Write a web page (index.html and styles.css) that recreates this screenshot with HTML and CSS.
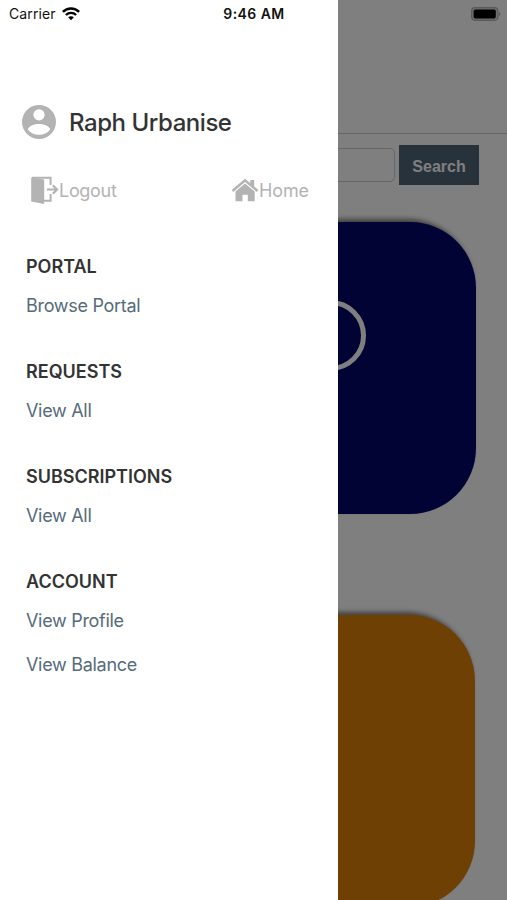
FILE: index.html
```
<!DOCTYPE html>
<html lang="en">
<head>
    <meta charset="UTF-8">
    <meta name="viewport" content="width=device-width, initial-scale=1.0">
    <title>Urbanise Portal</title>
    <link rel="stylesheet" href="styles.css">
</head>
<body>
    <div class="page">
        <div class="page-header"></div>
        <div class="search">
            <input class="search-input" type="text" aria-label="Search">
            <button class="search-button">Search</button>
        </div>
        <div class="cards">
            <div class="card card-blue">
                <div class="ring"></div>
            </div>
            <div class="card card-orange"></div>
        </div>
    </div>

    <div class="backdrop"></div>

    <nav class="drawer">
        <div class="user">
            <svg class="avatar" viewBox="0 0 34 34">
                <circle cx="17" cy="17" r="17" fill="#b3b3b3"/>
                <circle cx="17" cy="9.8" r="5.6" fill="#fff"/>
                <path d="M5.800 24.400C7.200 20.300 12.500 18.900 17 18.900s9.800 1.400 11.200 5.500C25.800 28 21.500 29.800 17 29.800S8.200 28 5.800 24.400z" fill="#fff"/>
            </svg>
            <span class="user-name">Raph Urbanise</span>
        </div>

        <div class="actions">
            <a class="action">
                <svg width="29" height="28" viewBox="0 0 29 28">
                    <path d="M1.200 1.500L14.200 3.500V28L1.200 25.500z" fill="#b3b3b3"/>
                    <path d="M2 1.700H20.600V9M20.600 18V24.800H14" fill="none" stroke="#b3b3b3" stroke-width="2"/>
                    <path d="M17 13.500H26.500M22.800 9.300L27 13.500L22.800 17.700" fill="none" stroke="#b3b3b3" stroke-width="2.200"/>
                </svg>
                <span>Logout</span>
            </a>
            <a class="action home">
                <svg width="28" height="28" viewBox="0 0 28 28">
                    <path d="M1.500 15L14 4.300L26.500 15" fill="none" stroke="#b3b3b3" stroke-width="2.500"/>
                    <path d="M19.300 4H23.200V12.200L19.300 8.800z" fill="#b3b3b3"/>
                    <path d="M4.500 15.500L14 7.500L23.700 15.500V25.300H16.800V18.800H11.500V25.300H4.500z" fill="#b3b3b3"/>
                </svg>
                <span>Home</span>
            </a>
        </div>

        <div class="menu">
            <section class="group">
                <h2>PORTAL</h2>
                <a>Browse Portal</a>
            </section>
            <section class="group">
                <h2>REQUESTS</h2>
                <a>View All</a>
            </section>
            <section class="group">
                <h2>SUBSCRIPTIONS</h2>
                <a>View All</a>
            </section>
            <section class="group">
                <h2>ACCOUNT</h2>
                <a>View Profile</a>
                <a>View Balance</a>
            </section>
        </div>
    </nav>

    <div class="status-bar">
        <div class="carrier">
            <span>Carrier</span>
            <svg width="18" height="14" viewBox="0 0 18 14">
                <path d="M0.900 4.900C5.300 0.300 12.700 0.300 17.100 4.900" fill="none" stroke="#000" stroke-width="2.500"/>
                <path d="M3.900 8C6.700 5.200 11.300 5.200 14.100 8" fill="none" stroke="#000" stroke-width="2.300"/>
                <path d="M6.200 10.300C7.700 8.900 10.300 8.900 11.800 10.300L9 13.200z" fill="#000"/>
            </svg>
        </div>
        <div class="time">9:46 AM</div>
        <svg class="battery" width="30" height="14" viewBox="0 0 30 14">
            <rect x="0.600" y="0.700" width="26.400" height="12.600" rx="3.500" fill="#6e6e6e" stroke="#5a5a5a" stroke-width="1.200"/>
            <rect x="2.600" y="2.500" width="22.200" height="9" rx="1.800" fill="#000"/>
            <path d="M28.100 4.800C29.800 5.300 29.800 8.700 28.100 9.200z" fill="#5a5a5a"/>
        </svg>
    </div>
</body>
</html>
```

FILE: styles.css
```
* {
    box-sizing: border-box;
}

body {
    margin: 0;
    height: 900px;
    position: relative;
    overflow: hidden;
    background: #fff;
    font-family: Inter, "Liberation Sans", sans-serif;
}

/* page behind the drawer */
.page {
    height: 900px;
    overflow: hidden;
}

.page-header {
    height: 134px;
    border-bottom: 1px solid #ccc;
}

.search {
    display: flex;
    justify-content: flex-end;
    align-items: center;
    gap: 4px;
    padding: 11px 28px 0 0;
}

.search-input {
    width: 300px;
    height: 34px;
    border: 1px solid #ccc;
    border-radius: 5px;
    background: #fff;
}

.search-button {
    width: 80px;
    height: 40px;
    padding: 3px 0 0;
    border: none;
    background: #506577;
    color: #fff;
    font: bold 16px "Liberation Sans", Arial, sans-serif;
}

.cards {
    display: flex;
    flex-direction: column;
    align-items: flex-end;
    gap: 101px;
    padding: 37px 31px 0 0;
}

.card {
    flex: none;
    width: 292px;
    height: 292px;
    border-radius: 66px;
    box-shadow: -3px -3px 5px rgba(0, 0, 0, 0.5);
}

.card-blue {
    background: #000666;
    padding-top: 78px;
}

.card-orange {
    background: #de8008;
    margin-right: 1px;
}

.ring {
    width: 71px;
    height: 71px;
    margin: 0 auto;
    border: 5px solid #fff;
    border-radius: 50%;
}

.backdrop {
    position: absolute;
    inset: 0;
    background: rgba(0, 0, 0, 0.5);
}

/* drawer */
.drawer {
    position: absolute;
    top: 0;
    left: 0;
    width: 338px;
    height: 900px;
    padding-top: 105px;
    background: #fff;
}

.user {
    display: flex;
    align-items: center;
    height: 34px;
    padding-left: 22px;
    gap: 13px;
}

.avatar {
    width: 34px;
    height: 34px;
}

.user-name {
    color: #333;
    font-size: 24px;
    font-weight: 450;
    letter-spacing: -0.45px;
}

.actions {
    display: flex;
    justify-content: space-between;
    padding: 37px 29px 0 30px;
}

.action {
    display: flex;
    align-items: center;
    height: 28px;
    color: #b3b3b3;
    font-size: 18px;
    letter-spacing: -0.3px;
}

.home {
    letter-spacing: -0.1px;
}

.menu {
    padding: 51px 26px 0;
}

.group {
    margin-bottom: 42px;
}

.group h2 {
    margin: 0 0 15px;
    color: #333;
    font-size: 18px;
    font-weight: 600;
    line-height: 24px;
}

.group a {
    display: block;
    color: #566b7a;
    font-size: 18px;
    line-height: 24px;
    letter-spacing: -0.3px;
}

.group a + a {
    margin-top: 20px;
}

.status-bar {
    position: absolute;
    top: 0;
    left: 0;
    width: 100%;
    height: 27px;
    display: grid;
    grid-template-columns: 1fr auto 1fr;
    align-items: center;
    padding: 0 6px 0 7px;
    color: #111;
    font-size: 14px;
}

.carrier {
    display: flex;
    align-items: center;
    gap: 6px;
    padding-left: 2px;
    letter-spacing: 0.1px;
}

.time {
    font-weight: 600;
    letter-spacing: 0.45px;
}

.battery {
    justify-self: end;
}
```
